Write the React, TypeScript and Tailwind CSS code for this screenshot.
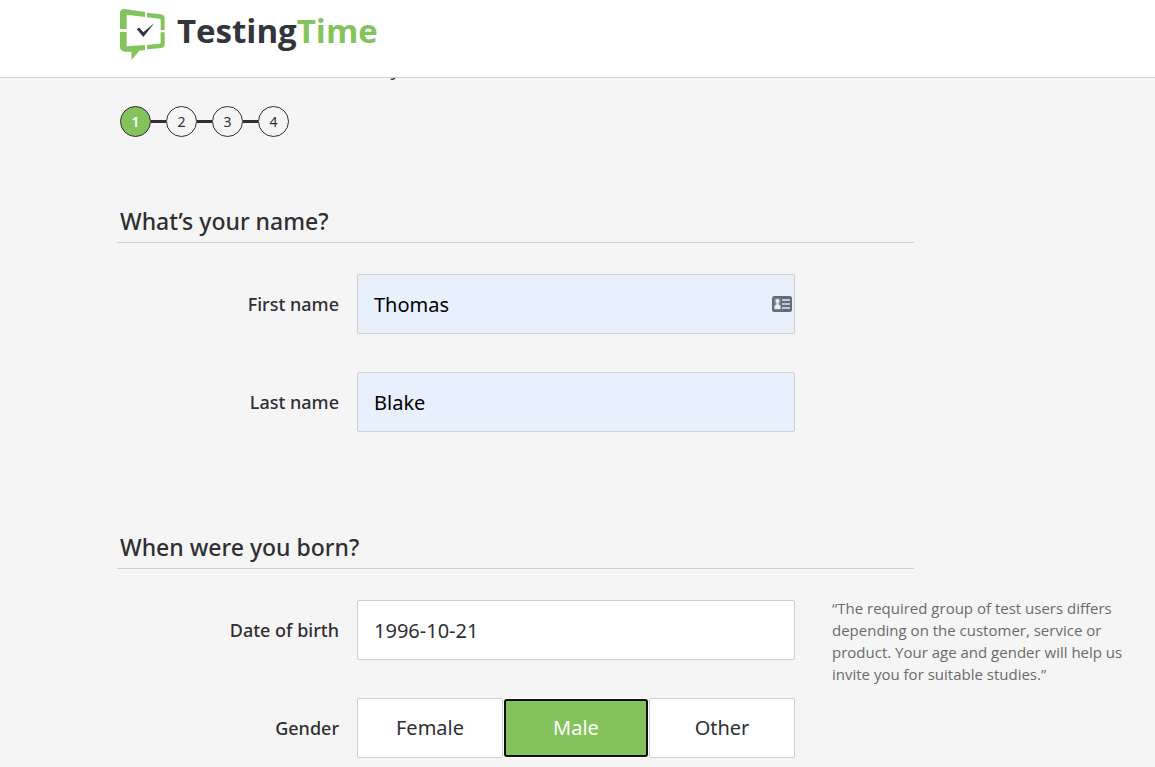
import React, { useState } from 'react';

const STEPS = [1, 2, 3, 4];
const GENDERS = ['Female', 'Male', 'Other'];

const App: React.FC = () => {
  const [firstName, setFirstName] = useState('Thomas');
  const [lastName, setLastName] = useState('Blake');
  const [birthday, setBirthday] = useState('1996-10-21');
  const [gender, setGender] = useState('Male');

  return (
    <div className="min-h-screen bg-[#f5f5f5] font-['Noto_Sans',sans-serif] text-[#2f2f33]">
      <header className="h-[78px] border-b border-[#cfcfcf] bg-white px-[120px] pt-2">
        <a href="#" className="inline-flex items-start gap-3">
          <Logo />
          <span className="font-['Open_Sans',sans-serif] text-[33px] leading-[46px] font-bold text-[#32353b]">
            Testing<span className="text-[#84c45c]">Time</span>
          </span>
        </a>
      </header>

      <main className="overflow-hidden pr-8 pb-2 pl-[117px]">
        {/* Page title, scrolled up behind the header */}
        <h1 className="-mt-6 h-[52px] pl-[3px] font-['Open_Sans',sans-serif] text-xl">
          Tell us a bit more about who you are
        </h1>

        <ol className="flex items-center pl-[3px]">
          {STEPS.map(step => (
            <li key={step} className="flex items-center">
              {step > 1 && <span className="h-[3px] w-[15px] bg-[#2f2f33]" />}
              <span
                className={`flex size-[31px] items-center justify-center rounded-full border border-[#2f2f33] text-sm ${step === 1 ? 'bg-[#84c25b] font-semibold text-white' : ''}`}
              >
                {step}
              </span>
            </li>
          ))}
        </ol>

        <div className="flex flex-col gap-[97px] pt-[66px]">
          <Section title="What’s your name?">
            <Row label="First name" htmlFor="first-name">
              <div className="relative">
                <input
                  id="first-name"
                  value={firstName}
                  onChange={e => setFirstName(e.target.value)}
                  className="h-[60px] w-full rounded-xs border border-[#cfcfcf] bg-[#e8effd] px-4 text-xl text-black"
                />
                <ContactIcon />
              </div>
            </Row>
            <Row label="Last name" htmlFor="last-name">
              <input
                id="last-name"
                value={lastName}
                onChange={e => setLastName(e.target.value)}
                className="h-[60px] w-full rounded-xs border border-[#cfcfcf] bg-[#e8effd] px-4 text-xl text-black"
              />
            </Row>
          </Section>

          <Section title="When were you born?">
            <Row
              label="Date of birth"
              htmlFor="birthday"
              note="“The required group of test users differs depending on the customer, service or product. Your age and gender will help us invite you for suitable studies.”"
            >
              <input
                id="birthday"
                value={birthday}
                onChange={e => setBirthday(e.target.value)}
                className="h-[60px] w-full rounded-xs border border-[#cfcfcf] bg-white px-4 text-xl"
              />
            </Row>
            <Row label="Gender">
              <div role="group" aria-label="Gender" className="grid grid-cols-3">
                {GENDERS.map(option => (
                  <button
                    key={option}
                    type="button"
                    aria-pressed={gender === option}
                    onClick={() => setGender(option)}
                    className={`h-[60px] border text-xl ${gender === option ? 'rounded-[4px] border-white bg-[#84c25b] text-white outline-2 -outline-offset-3 outline-[#101010]' : 'rounded-xs border-[#cfcfcf] bg-white'}`}
                  >
                    {option}
                  </button>
                ))}
              </div>
            </Row>
          </Section>
        </div>
      </main>
    </div>
  );
};

interface SectionProps {
  title: string;
  children: React.ReactNode;
}

const Section = ({ title, children }: SectionProps) => (
  <section>
    <h2 className="max-w-[797px] border-b border-[#cfcfcf] pb-[3px] pl-[3px] text-[23px] leading-9 font-medium">
      {title}
    </h2>
    <div className="flex flex-col gap-[38px] pt-[31px]">{children}</div>
  </section>
);

interface RowProps {
  label: string;
  htmlFor?: string;
  note?: string;
  children: React.ReactNode;
}

const Row = ({ label, htmlFor, note, children }: RowProps) => (
  <div className="flex h-[60px]">
    <div className="flex w-[222px] shrink-0 items-center justify-end text-lg font-medium">
      {htmlFor ? <label htmlFor={htmlFor}>{label}</label> : <span>{label}</span>}
    </div>
    <div className="ml-[18px] w-[438px] shrink-0">{children}</div>
    {note && (
      <p className="-mt-[3px] ml-[37px] max-w-[300px] font-['Open_Sans',sans-serif] text-[15px] leading-[22px] text-[#6b6b6b]">
        {note}
      </p>
    )}
  </div>
);

const Logo = () => (
  <svg width="45" height="52" viewBox="30 24 135 156" aria-hidden="true">
    <g fill="#84c45c">
      <path d="M30 87V40Q30 26 44 27L105 36V51L50 44V87Z" />
      <path d="M111 38L152 43Q164 45 164 55V90H152V60Q152 57 149 56L111 52Z" />
      <path d="M152 97H164V132Q164 142 154 144L111 148V135L148 131Q152 131 152 127Z" />
      <path d="M30 96H50V139L105 135V150L88 152L65 180L64 155H45Q30 154 30 140Z" />
    </g>
    <path d="M80 87L88 83L100 97L133 69L100 111Z" fill="#32353b" />
  </svg>
);

// Autofill contact card shown at the end of the field
const ContactIcon = () => (
  <svg className="absolute top-[22px] right-[3px]" width="20" height="16" viewBox="0 0 20 16" aria-hidden="true">
    <rect width="20" height="16" rx="2.5" fill="#666a73" />
    <path d="M2 2H9V14H2Z" fill="#7e838d" />
    <circle cx="5.5" cy="5" r="2.1" fill="#e8effd" />
    <path d="M4.5 6.5H6.5V8.5L8.5 10V13H2.5V10L4.5 8.5Z" fill="#e8effd" />
    <path d="M10 4H18M10 8H18M10 12H18" stroke="#c3c9d6" strokeWidth="2" />
  </svg>
);

export default App;
